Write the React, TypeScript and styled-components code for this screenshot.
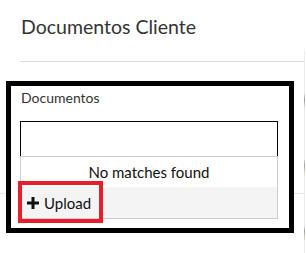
import styled, { createGlobalStyle } from 'styled-components';

const GlobalStyle = createGlobalStyle`
  html, body {
    margin: 0;
    padding: 0;
    background: #fff;
  }
  body {
    font-family: Lato, "Liberation Sans", sans-serif;
    color: #333;
    width: 306px;
    height: 253px;
    overflow: hidden;
  }
`;

const Page = styled.div`
  position: relative;
  display: flex;
  width: 306px;
  height: 253px;
`;

const Main = styled.main`
  flex: 1;
  display: flex;
  flex-direction: column;
`;

/** Clipped neighbour panel peeking in from the right */
const SideEdge = styled.aside`
  width: 1px;
  margin-top: 50px;
  display: flex;
  flex-direction: column;
  gap: 52px;
  border-left: 1px solid #ececec;
`;

const EdgeMark = styled.span`
  display: block;
  width: 1px;
  height: 14px;
  margin: 44px 0 0 -1px;
  background: linear-gradient(#ddd, #9a9aa3 40%, #c9c4b0 70%, #ddd);

  & + & {
    margin-top: 0;
  }
`;

const Header = styled.header`
  height: 62px;
  box-sizing: border-box;
  padding: 15px 0 0 1px;
  margin-left: 20px;
  border-bottom: 1px solid #ddd;
`;

const Title = styled.h1`
  margin: 0;
  font-size: 19.5px;
  line-height: 24px;
  font-weight: 400;
  color: #333;
`;

const Row = styled.div`
  height: 132px;
  box-sizing: border-box;
  border-bottom: 1px solid #e4e4e4;
`;

/** Highlight frame drawn on top of the page */
const Frame = styled.section`
  position: absolute;
  left: 6px;
  top: 81px;
  width: 288px;
  height: 152px;
  box-sizing: border-box;
  border: 5px solid #000;
  background: #fff;
  padding: 3px 11px 0 9px;
  display: flex;
  flex-direction: column;
`;

const Label = styled.label`
  font-size: 14px;
  line-height: 17px;
  color: #333;
  padding-left: 1px;
`;

const Combo = styled.div`
  margin-top: 15px;
  width: 258px;
  display: flex;
  flex-direction: column;
`;

const Input = styled.div`
  height: 35px;
  box-sizing: border-box;
  border: 1px solid #000;
  border-bottom: none;
`;

const Menu = styled.ul`
  list-style: none;
  margin: 0;
  padding: 0;
  border: 1px solid #ccc;
  display: flex;
  flex-direction: column;
`;

const Empty = styled.li`
  height: 30px;
  display: flex;
  align-items: center;
  justify-content: center;
  font-size: 15px;
  color: #111;
`;

const Option = styled.li<{ $muted?: boolean }>`
  position: relative;
  height: 31px;
  display: flex;
  align-items: center;
  background: ${({ $muted }) => ($muted ? '#f4f4f4' : '#fff')};
`;

const UploadButton = styled.button`
  position: relative;
  display: inline-flex;
  align-items: center;
  gap: 5px;
  height: 100%;
  padding: 0 0 0 6px;
  width: 80px;
  border: none;
  background: transparent;
  font-family: inherit;
  font-size: 15px;
  color: #111;

  &::after {
    content: '';
    position: absolute;
    left: -3px;
    top: -6px;
    width: 85px;
    height: 42px;
    box-sizing: border-box;
    border: 4px solid #e81f2b;
  }
`;

const PlusIcon = () => (
  <svg width="12" height="12" viewBox="0 0 12 12" aria-hidden>
    <path d="M4.5 0h3v4.5H12v3H7.5V12h-3V7.5H0v-3h4.5z" fill="#111" />
  </svg>
);

export default function App() {
  return (
    <>
      <GlobalStyle />
      <Page>
        <Main>
          <Header>
            <Title>Documentos Cliente</Title>
          </Header>
          <Row />
        </Main>
        <SideEdge>
          <EdgeMark />
          <EdgeMark />
          <EdgeMark />
        </SideEdge>
        <Frame>
          <Label>Documentos</Label>
          <Combo>
            <Input />
            <Menu>
              <Empty>No matches found</Empty>
              <Option $muted>
                <UploadButton>
                  <PlusIcon />
                  Upload
                </UploadButton>
              </Option>
            </Menu>
          </Combo>
        </Frame>
      </Page>
    </>
  );
}
